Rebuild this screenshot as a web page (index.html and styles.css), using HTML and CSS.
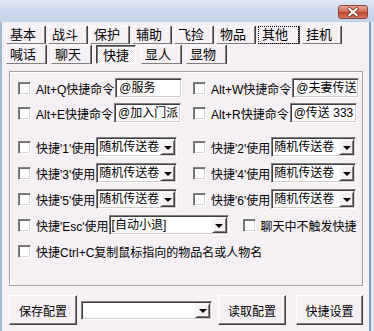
FILE: index.html
```html
<!DOCTYPE html>
<html lang="zh-CN">
<head>
  <meta charset="UTF-8">
  <meta name="viewport" content="width=device-width, initial-scale=1.0">
  <title>快捷设置</title>
  <link rel="stylesheet" href="styles.css">
</head>
<body>
  <div class="window">
    <div class="titlebar">
      <div class="close-btn">
        <svg width="14" height="10" viewBox="0 0 14 10">
          <path d="M3.5 2 L10.5 8 M10.5 2 L3.5 8" stroke="#7a3328" stroke-width="3.8" stroke-linecap="square" fill="none"/>
          <path d="M3.5 2 L10.5 8 M10.5 2 L3.5 8" stroke="#fff" stroke-width="2.2" stroke-linecap="square" fill="none"/>
        </svg>
      </div>
    </div>

    <div class="client">
      <div class="tab-row">
        <div class="tab">基本</div>
        <div class="tab">战斗</div>
        <div class="tab">保护</div>
        <div class="tab">辅助</div>
        <div class="tab">飞捡</div>
        <div class="tab">物品</div>
        <div class="tab focus">其他</div>
        <div class="tab">挂机</div>
      </div>
      <div class="tab-row second">
        <div class="tab">喊话</div>
        <div class="tab">聊天</div>
        <div class="tab active">快捷</div>
        <div class="tab">显人</div>
        <div class="tab">显物</div>
      </div>

      <div class="group">
        <div class="row cols">
          <div class="cell"><span class="check"></span><span class="label">Alt+Q快捷命令</span><span class="edit">@服务</span></div>
          <div class="cell"><span class="check"></span><span class="label">Alt+W快捷命令</span><span class="edit">@夫妻传送</span></div>
        </div>
        <div class="row cols r2">
          <div class="cell"><span class="check"></span><span class="label">Alt+E快捷命令</span><span class="edit">@加入门派</span></div>
          <div class="cell"><span class="check"></span><span class="label">Alt+R快捷命令</span><span class="edit">@传送 333 333</span></div>
        </div>

        <div class="row cols r3">
          <div class="cell"><span class="check"></span><span class="label">快捷'1'使用</span>
            <span class="combo"><span class="combo-text">随机传送卷</span><span class="drop"></span></span></div>
          <div class="cell"><span class="check"></span><span class="label">快捷'2'使用</span>
            <span class="combo wide"><span class="combo-text">随机传送卷</span><span class="drop"></span></span></div>
        </div>
        <div class="row cols">
          <div class="cell"><span class="check"></span><span class="label">快捷'3'使用</span>
            <span class="combo"><span class="combo-text">随机传送卷</span><span class="drop"></span></span></div>
          <div class="cell"><span class="check"></span><span class="label">快捷'4'使用</span>
            <span class="combo wide"><span class="combo-text">随机传送卷</span><span class="drop"></span></span></div>
        </div>
        <div class="row cols">
          <div class="cell"><span class="check"></span><span class="label">快捷'5'使用</span>
            <span class="combo"><span class="combo-text">随机传送卷</span><span class="drop"></span></span></div>
          <div class="cell"><span class="check"></span><span class="label">快捷'6'使用</span>
            <span class="combo wide"><span class="combo-text">随机传送卷</span><span class="drop"></span></span></div>
        </div>

        <div class="row">
          <div class="cell"><span class="check"></span><span class="label">快捷'Esc'使用</span>
            <span class="combo esc"><span class="combo-text">[自动小退]</span><span class="drop"></span></span></div>
          <div class="cell chat"><span class="check"></span><span class="label">聊天中不触发快捷</span></div>
        </div>
        <div class="row">
          <div class="cell"><span class="check"></span><span class="label">快捷Ctrl+C复制鼠标指向的物品名或人物名</span></div>
        </div>
      </div>

      <div class="footer">
        <div class="button">保存配置</div>
        <span class="combo config"><span class="combo-text"></span><span class="drop"></span></span>
        <div class="button load">读取配置</div>
        <div class="button setup">快捷设置</div>
      </div>
    </div>
  </div>
</body>
</html>
```

FILE: styles.css
```css
body {
  margin: 0;
  padding: 0;
  font-family: "Liberation Sans", "Noto Sans CJK SC", sans-serif;
  font-size: 12px;
  color: #000;
}

.window {
  width: 374px;
  height: 331px;
  display: flex;
  flex-direction: column;
  background: #f4f0f4;
  overflow: hidden;
}

.titlebar {
  height: 22px;
  flex: none;
  display: flex;
  justify-content: flex-end;
  align-items: flex-start;
  padding-right: 6px;
  background: linear-gradient(#e1e9f4, #cfdcee 40%, #c3d3e9);
  box-sizing: border-box;
}

.close-btn {
  width: 30px;
  height: 14px;
  margin-top: 5px;
  box-sizing: border-box;
  border: 1px solid #8a4438;
  border-radius: 3px;
  background: linear-gradient(#e9a898, #d0705c 45%, #c2442c 55%, #d77a62);
  display: flex;
  align-items: center;
  justify-content: center;
}

.client {
  flex: 1;
  border-left: 2px solid #a6b9d4;
  border-right: 2px solid #7c9dcb;
  margin-right: 3px;
  padding-top: 4px;
  padding-left: 4px;
  box-shadow: 3px 0 0 #dde7f4;
}

/* tabs */
.tab-row {
  display: flex;
  height: 18px;
}

.tab-row.second {
  height: 19px;
  margin-top: 1px;
}

.tab {
  width: 39px;
  margin-right: 3px;
  box-sizing: border-box;
  border: 1px solid;
  border-color: #fff #808080 #808080 #fff;
  box-shadow: 1px 0 0 #404040;
  padding-left: 3px;
  font-size: 13px;
  line-height: 16px;
}

.second .tab {
  width: 40px;
  margin-right: 5px;
  line-height: 17px;
}

.tab.focus {
  outline: 1px dotted #000;
  outline-offset: -1px;
  width: 41px;
}

.tab.active {
  border-color: #404040 #fff #fff #404040;
  box-shadow: inset 1px 1px 0 #808080;
  background: repeating-conic-gradient(#ffffff 0 25%, #ece8ec 0 50%) 0 0 / 2px 2px;
  padding-left: 6px;
  padding-top: 1px;
}

/* options panel */
.group {
  margin: 7px 6px 0 3px;
  border: 1px solid #a0a0a0;
  box-shadow: inset 1px 1px 0 #fff, 1px 1px 0 #fff;
  padding: 6px 0 24px 8px;
}

.row {
  display: flex;
  height: 20px;
  margin-top: 6px;
}

.row:first-child {
  margin-top: 0;
}

.row.r2 {
  margin-top: 5px;
}

.row.r3 {
  margin-top: 14px;
}

.cols {
  display: grid;
  grid-template-columns: 175px 1fr;
}

.cell {
  display: flex;
  align-items: center;
  white-space: nowrap;
}

.cell.chat {
  margin-left: 14px;
}

.check {
  width: 13px;
  height: 13px;
  flex: none;
  box-sizing: border-box;
  background: #fff;
  border: 1px solid;
  border-color: #808080 #fff #fff #808080;
  box-shadow: inset 1px 1px 0 #6a6a6a, inset -1px -1px 0 #d8d4d8;
  margin-right: 5px;
}

.label {
  flex: none;
}

.edit,
.combo {
  box-sizing: border-box;
  height: 20px;
  background: #fff;
  border: 1px solid;
  border-color: #808080 #fff #fff #808080;
  box-shadow: inset 1px 1px 0 #404040, inset -1px -1px 0 #d4d0c8;
  flex: none;
}

.edit {
  width: 67px;
  margin-left: 1px;
  padding: 0 3px;
  line-height: 18px;
  overflow: hidden;
}

.combo {
  width: 81px;
  margin-left: 1px;
  display: flex;
  padding: 1px;
}

.combo.wide {
  width: 85px;
}

.combo.esc {
  width: 120px;
  margin-left: 0;
}

.combo.config {
  width: 131px;
  height: 19px;
  margin-left: 4px;
}

.combo-text {
  flex: 1;
  padding-left: 1px;
  line-height: 16px;
  overflow: hidden;
}

.drop {
  width: 15px;
  flex: none;
  box-sizing: border-box;
  background: #f4f0f4;
  border: 1px solid;
  border-color: #f4f0f4 #404040 #404040 #f4f0f4;
  box-shadow: inset 1px 1px 0 #fff, inset -1px -1px 0 #808080;
  display: flex;
  align-items: center;
  justify-content: center;
}

.drop::after {
  content: "";
  border-left: 4px solid transparent;
  border-right: 4px solid transparent;
  border-top: 4px solid #000;
  margin-top: 1px;
}

/* bottom buttons */
.footer {
  display: flex;
  align-items: center;
  margin-top: 9px;
  padding-left: 3px;
}

.button {
  width: 68px;
  height: 30px;
  box-sizing: border-box;
  border: 1px solid;
  border-color: #fff #404040 #404040 #fff;
  box-shadow: inset -1px -1px 0 #808080;
  display: flex;
  align-items: center;
  justify-content: center;
  flex: none;
}

.button.load {
  margin-left: 6px;
}

.button.setup {
  width: 67px;
  margin-left: 10px;
}
```
